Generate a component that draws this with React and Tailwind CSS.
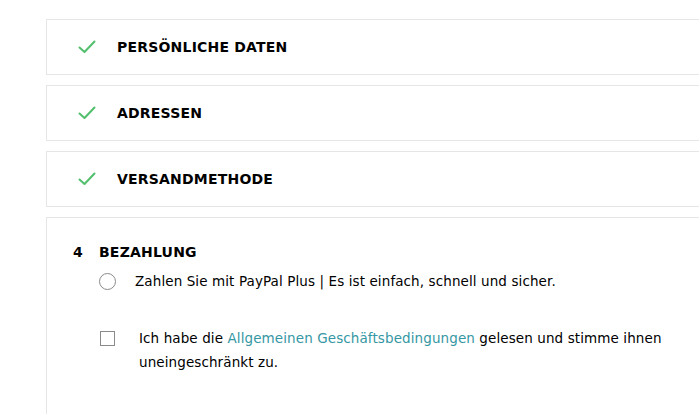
export default function App() {
  const steps = ["PERSÖNLICHE DATEN", "ADRESSEN", "VERSANDMETHODE"]

  return (
    <div className="w-[699px] h-[414px] overflow-hidden bg-white pl-[46px] pt-[19px] font-['DejaVu_Sans',sans-serif] text-black">
      <div className="flex w-[700px] flex-col gap-[10px]">
        {steps.map((step) => (
          <div key={step} className="flex h-[56px] items-center border border-[#e6e6e6]">
            <svg className="ml-[31px] h-[14px] w-[18px]" viewBox="0 0 18 14" fill="none">
              <path d="M1.5 7.5 L6.5 12 L16.5 1.5" stroke="#52bf6c" strokeWidth="2" strokeLinecap="round" strokeLinejoin="round" />
            </svg>
            <h2 className="ml-[21px] -mt-[1px] text-[14px] font-bold leading-none tracking-[0.2px]">{step}</h2>
          </div>
        ))}

        <div className="h-[220px] border border-[#e6e6e6] pl-[26px] pt-[24px]">
          <h2 className="flex items-center text-[14px] font-bold leading-[20px] tracking-[0.2px]">
            <span className="w-[26px]">4</span>
            BEZAHLUNG
          </h2>

          <label className="mt-[9px] ml-[26px] flex items-center">
            <span className="mt-[1px] h-[17px] w-[17px] rounded-full border border-[#8a8a8a]"></span>
            <span className="ml-[19px] text-[13.5px] leading-[20px] tracking-[0.1px]">
              Zahlen Sie mit PayPal Plus | Es ist einfach, schnell und sicher.
            </span>
          </label>

          <label className="mt-[35px] ml-[27px] flex items-start">
            <span className="mt-[5px] h-[15px] w-[15px] shrink-0 border border-[#8a8a8a]"></span>
            <span className="ml-[24px] w-[545px] text-[13.5px] leading-[24px] tracking-[0.1px]">
              Ich habe die <a className="text-[#3597a3]">Allgemeinen Geschäftsbedingungen</a> gelesen und stimme ihnen
              uneingeschränkt zu.
            </span>
          </label>
        </div>
      </div>
    </div>
  )
}
